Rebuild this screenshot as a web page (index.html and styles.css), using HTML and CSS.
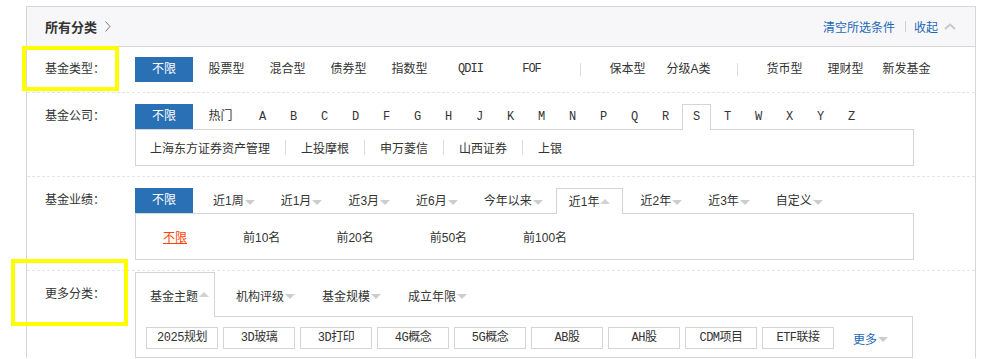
FILE: index.html
```html
<!DOCTYPE html>
<html lang="zh-CN">
<head>
<meta charset="utf-8">
<title>所有分类</title>
<link rel="stylesheet" href="styles.css">
</head>
<body>
<div class="panel">
  <div class="head">
    <div class="title">所有分类<svg class="chev-r" width="6" height="11" viewBox="0 0 6 11"><polyline points="0.5,0.5 5,5.5 0.5,10.5" fill="none" stroke="#777" stroke-width="1"/></svg></div>
    <div class="actions">
      <span class="link">清空所选条件</span><span class="hsep"></span><span class="link">收起</span><svg class="chev-u" width="12" height="7" viewBox="0 0 12 7"><polyline points="1,6 6,1.5 11,6" fill="none" stroke="#c8c8c8" stroke-width="2"/></svg>
    </div>
  </div>

  <div class="row r1">
    <div class="label">基金类型：</div>
    <div class="content">
      <div class="opts">
        <span class="btn">不限</span>
        <span class="opt first">股票型</span>
        <span class="opt">混合型</span>
        <span class="opt">债券型</span>
        <span class="opt">指数型</span>
        <span class="opt mono">QDII</span>
        <span class="opt mono">FOF</span>
        <span class="vline"></span>
        <span class="opt">保本型</span>
        <span class="opt">分级A类</span>
        <span class="vline"></span>
        <span class="opt">货币型</span>
        <span class="opt">理财型</span>
        <span class="opt">新发基金</span>
      </div>
    </div>
  </div>

  <div class="row r2">
    <div class="label">基金公司：</div>
    <div class="content">
      <div class="tabs">
        <span class="btn">不限</span>
        <span class="hot">热门</span>
        <span class="lt">A</span><span class="lt">B</span><span class="lt">C</span><span class="lt">D</span><span class="lt">F</span><span class="lt">G</span><span class="lt">H</span><span class="lt">J</span><span class="lt">K</span><span class="lt">M</span><span class="lt">N</span><span class="lt">P</span><span class="lt">Q</span><span class="lt">R</span><span class="lt active">S</span><span class="lt">T</span><span class="lt">W</span><span class="lt">X</span><span class="lt">Y</span><span class="lt">Z</span>
      </div>
      <div class="sub sub-co">
        <span class="co">上海东方证券资产管理</span><span class="isep"></span>
        <span class="co">上投摩根</span><span class="isep"></span>
        <span class="co">申万菱信</span><span class="isep"></span>
        <span class="co">山西证券</span><span class="isep"></span>
        <span class="co">上银</span>
      </div>
    </div>
  </div>

  <div class="row r3">
    <div class="label">基金业绩：</div>
    <div class="content">
      <div class="tabs">
        <span class="btn">不限</span>
        <span class="per first">近1周<i class="tri"></i></span>
        <span class="per">近1月<i class="tri"></i></span>
        <span class="per">近3月<i class="tri"></i></span>
        <span class="per">近6月<i class="tri"></i></span>
        <span class="per">今年以来<i class="tri"></i></span>
        <span class="per active">近1年<i class="tri up"></i></span>
        <span class="per after">近2年<i class="tri"></i></span>
        <span class="per">近3年<i class="tri"></i></span>
        <span class="per">自定义<i class="tri"></i></span>
      </div>
      <div class="sub sub-rank">
        <span class="rank sel">不限</span>
        <span class="rank">前10名</span>
        <span class="rank">前20名</span>
        <span class="rank">前50名</span>
        <span class="rank">前100名</span>
      </div>
    </div>
  </div>

  <div class="row r4">
    <div class="label tall">更多分类：</div>
    <div class="content narrow">
      <div class="mtabs">
        <span class="mtab active">基金主题<i class="tri up"></i></span>
        <span class="mtab">机构评级<i class="tri"></i></span>
        <span class="mtab">基金规模<i class="tri"></i></span>
        <span class="mtab">成立年限<i class="tri"></i></span>
      </div>
      <div class="tags">
        <span class="tag">2025规划</span>
        <span class="tag">3D玻璃</span>
        <span class="tag">3D打印</span>
        <span class="tag">4G概念</span>
        <span class="tag">5G概念</span>
        <span class="tag">AB股</span>
        <span class="tag">AH股</span>
        <span class="tag">CDM项目</span>
        <span class="tag">ETF联接</span>
        <span class="more">更多<i class="tri"></i></span>
      </div>
    </div>
  </div>
</div>

<div class="hl hl-1"></div>
<div class="hl hl-2"></div>
</body>
</html>
```

FILE: styles.css
```css
* { box-sizing: border-box; }
html, body { margin: 0; padding: 0; background: #fff; }
body {
  font: 12px "Liberation Sans", "Noto Sans CJK SC", sans-serif;
  color: #333;
  position: relative;
  height: 359px;
  overflow: hidden;
}
i { font-style: normal; }

.panel {
  margin: 6px 0 0 26px;
  width: 950px;
  border: 1px solid #d6d6d6;
  border-bottom: none;
}

.head {
  height: 40px;
  background: #f7f7f9;
  border-bottom: 1px solid #d6d6d6;
  display: flex;
  align-items: center;
  justify-content: space-between;
  padding: 0 19px 0 18px;
}
.title {
  font-weight: bold;
  font-size: 13px;
  color: #333;
  display: flex;
  align-items: center;
}
.chev-r { margin-left: 8px; }
.actions { display: flex; align-items: center; }
.link { color: #1d67b5; }
.hsep { width: 1px; height: 11px; background: #d0d0d0; margin: 0 8px 0 10px; }
.chev-u { margin-left: 6px; }

.row {
  display: flex;
  align-items: flex-start;
  border-bottom: 1px dashed #e4e4e4;
}
.r1 { padding: 10px 0; }
.r2, .r3 { padding: 11px 0 10px; }
.r4 { padding: 1px 0 0; border-bottom: none; }

.label {
  flex: none;
  width: 108px;
  padding-left: 18px;
  height: 25px;
  line-height: 25px;
  color: #333;
}
.label.tall { height: 44px; line-height: 44px; }

.content { flex: none; width: 779px; }
.content.narrow { width: 778px; }

.btn {
  flex: none;
  width: 58px;
  height: 25px;
  line-height: 25px;
  text-align: center;
  background: #2a70b5;
  color: #fff;
}

.opts { display: flex; align-items: center; height: 25px; }
.opt {
  flex: none;
  width: 61px;
  text-align: center;
  line-height: 25px;
  white-space: nowrap;
}
.opt.first { margin-left: 3px; }
.mono { font-family: "Liberation Mono", "Noto Sans CJK SC", monospace; font-size: 12px; letter-spacing: -1px; }
.vline { flex: none; width: 1px; height: 13px; background: #dcdcdc; margin: 0 16px 0 18px; }

.tabs { display: flex; align-items: flex-start; height: 25px; }
.hot { flex: none; width: 51px; margin-left: 2px; height: 25px; line-height: 25px; text-align: center; }
.lt {
  flex: none;
  width: 29px;
  margin-left: 2px;
  height: 25px;
  line-height: 24px;
  text-align: center;
  font-family: "Liberation Mono", monospace;
  font-size: 12px;
  border: 1px solid transparent;
  border-bottom: none;
}
.lt.active,
.per.active {
  position: relative;
  z-index: 1;
  height: 26px;
  margin-bottom: -1px;
  border-color: #d5d5d5;
  background: #fff;
}

.sub {
  border: 1px solid #d5d5d5;
  display: flex;
  align-items: center;
}
.sub-co { height: 37px; padding-left: 14px; }
.isep { flex: none; width: 1px; height: 15px; background: #dcdcdc; margin: 0 15px; }

.per {
  flex: none;
  height: 25px;
  line-height: 24px;
  padding: 0 12px;
  border: 1px solid transparent;
  border-bottom: none;
  white-space: nowrap;
  display: flex;
  align-items: center;
}
.per.first { margin-left: 7px; }
.per.after { margin-left: 4px; }

.tri {
  display: inline-block;
  width: 0;
  height: 0;
  border-left: 5px solid transparent;
  border-right: 5px solid transparent;
  border-top: 5px solid #cdcdcd;
  margin-left: 1px;
  margin-top: 2px;
}
.tri.up {
  border-top: none;
  border-bottom: 5px solid #d2d2d2;
  margin-top: -1px;
}

.sub-rank { height: 47px; padding-left: 27px; gap: 56px; }
.rank { white-space: nowrap; }
.rank.sel { color: #ff4400; text-decoration: underline; }

.mtabs {
  display: flex;
  align-items: flex-start;
  border-bottom: 1px solid #d5d5d5;
}
.mtab {
  flex: none;
  width: 80px;
  height: 45px;
  margin-bottom: -1px;
  margin-right: 6px;
  padding-left: 14px;
  border: 1px solid transparent;
  border-bottom: none;
  display: flex;
  align-items: center;
  white-space: nowrap;
  font-size: 12px;
}
.mtab.active { border-color: #d5d5d5; background: #fff; }

.tags {
  border: 1px solid #d5d5d5;
  border-top: none;
  display: flex;
  align-items: center;
  padding: 10px 0 8px 10px;
}
.tag {
  flex: none;
  width: 72px;
  height: 22px;
  margin-right: 5px;
  border: 1px solid #d5d5d5;
  text-align: center;
  line-height: 20px;
  font-family: "Liberation Mono", "Noto Sans CJK SC", monospace;
  font-size: 12px;
  letter-spacing: -0.5px;
  white-space: nowrap;
}
.more { color: #1d67b5; margin-left: 14px; display: flex; align-items: center; }

.hl {
  position: absolute;
  border: 4px solid #ffff00;
  pointer-events: none;
}
.hl-1 { left: 22px; top: 46px; width: 97px; height: 45px; }
.hl-2 { left: 11px; top: 259px; width: 117px; height: 67px; }
```
